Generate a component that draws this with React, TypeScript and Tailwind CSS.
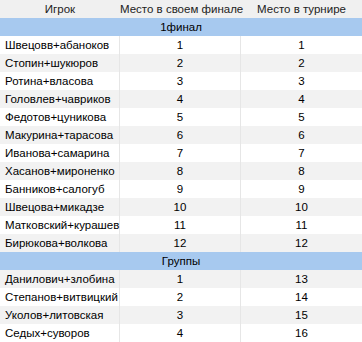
import React from "react";

const final1: [string, number, number][] = [
  ["Швецовв+абаноков", 1, 1],
  ["Стопин+шукюров", 2, 2],
  ["Ротина+власова", 3, 3],
  ["Головлев+чавриков", 4, 4],
  ["Федотов+цуникова", 5, 5],
  ["Макурина+тарасова", 6, 6],
  ["Иванова+самарина", 7, 7],
  ["Хасанов+мироненко", 8, 8],
  ["Банников+салогуб", 9, 9],
  ["Швецова+микадзе", 10, 10],
  ["Матковский+курашев", 11, 11],
  ["Бирюкова+волкова", 12, 12],
];
const groups: [string, number, number][] = [
  ["Данилович+злобина", 1, 13],
  ["Степанов+витвицкий", 2, 14],
  ["Уколов+литовская", 3, 15],
  ["Седых+суворов", 4, 16],
];

function Row({ r, gray }: { r: [string, number, number]; gray: boolean }) {
  return (
    <div className={`grid grid-cols-[120px_121px_121px] h-[18px] ${gray ? "bg-[#f2f2f2]" : "bg-white"}`}>
      <div className="pl-[5px] leading-[18px] border-r border-[#e6e6e6] whitespace-nowrap">{r[0]}</div>
      <div className="text-center leading-[18px] border-r border-[#e6e6e6]">{r[1]}</div>
      <div className="text-center leading-[18px]">{r[2]}</div>
    </div>
  );
}

function Group({ title }: { title: string }) {
  return <div className="h-[18px] leading-[18px] text-center bg-[#a7c9ef]">{title}</div>;
}

export default function App() {
  return (
    <div
      className="w-[362px] h-[342px] bg-white text-[11.5px] text-black overflow-hidden"
      style={{ fontFamily: '"Liberation Sans", Arial, sans-serif' }}
    >
      <div className="grid grid-cols-[120px_121px_121px] h-[18px] bg-[#f0f0f0] text-[#222] whitespace-nowrap">
        <div className="text-center leading-[18px]">Игрок</div>
        <div className="text-center leading-[18px]">Место в своем финале</div>
        <div className="text-center leading-[18px]">Место в турнире</div>
      </div>
      <Group title="1финал" />
      {final1.map((r, i) => (
        <Row key={r[0]} r={r} gray={i % 2 === 1} />
      ))}
      <Group title="Группы" />
      {groups.map((r, i) => (
        <Row key={r[0]} r={r} gray={i % 2 === 0} />
      ))}
    </div>
  );
}
